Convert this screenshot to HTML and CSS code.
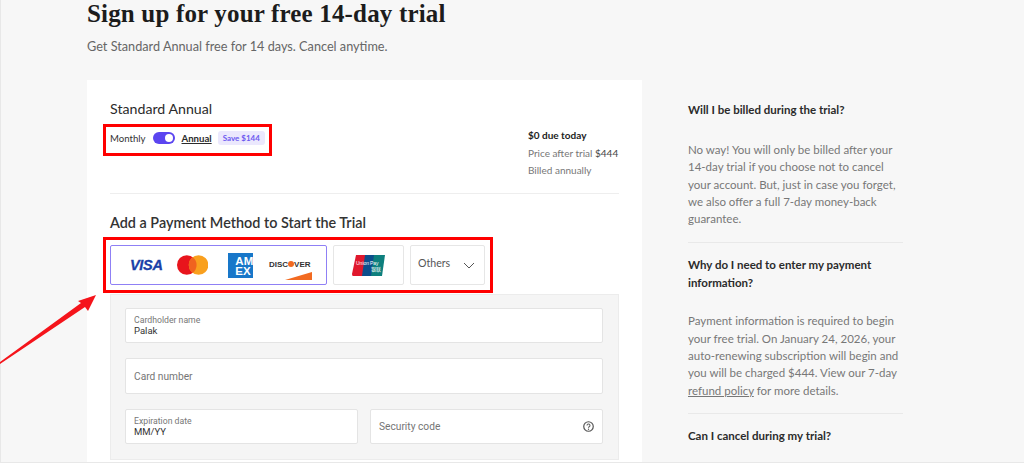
FILE: index.html
```html
<!DOCTYPE html>
<html lang="en">

<head>
  <meta charset="UTF-8">
  <title>Sign up for your free 14-day trial</title>
  <link rel="stylesheet" href="styles.css">
</head>

<body>
  <div class="page">
    <h1 class="title">Sign up for your free 14-day trial</h1>
    <p class="subtitle">Get Standard Annual free for 14 days. Cancel anytime.</p>

    <div class="columns">
      <main class="card">
        <!-- plan -->
        <section class="plan">
          <div class="plan-left">
            <h2 class="plan-name">Standard Annual</h2>
            <div class="billing">
              <span class="billing-label">Monthly</span>
              <span class="toggle"><span class="toggle-knob"></span></span>
              <span class="billing-active">Annual</span>
              <span class="save">Save $144</span>
            </div>
          </div>
          <div class="price">
            <div class="price-due">$0 due today</div>
            <div>Price after trial <span class="price-amount">$444</span></div>
            <div>Billed annually</div>
          </div>
        </section>

        <!-- payment -->
        <h2 class="pay-title">Add a Payment Method to Start the Trial</h2>
        <div class="methods">
          <div class="method method-cards">
            <span class="visa">VISA</span>
            <svg class="mc" width="32" height="20" viewBox="0 0 32 20">
              <circle cx="10" cy="10" r="10" fill="#e8141c" />
              <circle cx="22" cy="10" r="10" fill="#f9a01e" />
              <path d="M16 2a10 10 0 0 1 0 16a10 10 0 0 1 0-16z" fill="#f0631f" />
            </svg>
            <span class="amex">AM<br>EX</span>
            <span class="discover">
              <span class="discover-name">DISC<i class="discover-dot"></i>VER</span>
              <svg class="discover-wedge" width="27" height="8" viewBox="0 0 27 8">
                <path d="M0 8L27 0V8z" fill="#f26a21" />
              </svg>
            </span>
          </div>
          <div class="method method-union">
            <svg width="33" height="21" viewBox="0 0 33 21">
              <path d="M4 0H15L12 21H1Q0 21 0 19z" fill="#e0182d" />
              <path d="M13 0H24L21 21H10z" fill="#0c4e8c" />
              <path d="M22 0H33L30 21H19z" fill="#0d7f7d" />
              <text x="4" y="10" class="union-text">Union</text>
              <text x="18" y="10" class="union-text">Pay</text>
              <text x="19" y="16" class="union-text">银联</text>
            </svg>
          </div>
          <div class="method method-others">
            <span class="others-text">Others</span>
            <svg width="12" height="7" viewBox="0 0 12 7">
              <path d="M1 1l5 5l5-5" fill="none" stroke="#555" stroke-width="1" />
            </svg>
          </div>
        </div>

        <div class="form">
          <div class="field field-filled">
            <label class="field-label">Cardholder name</label>
            <div class="field-value">Palak</div>
          </div>
          <div class="field field-tall">
            <span class="field-hint">Card number</span>
          </div>
          <div class="field-row">
            <div class="field field-filled">
              <label class="field-label">Expiration date</label>
              <div class="field-value">MM/YY</div>
            </div>
            <div class="field field-help">
              <span class="field-hint">Security code</span>
              <svg width="11" height="11" viewBox="0 0 12 12">
                <circle cx="6" cy="6" r="5.2" fill="none" stroke="#555" stroke-width="1.3" />
                <path d="M4.4 4.8a1.6 1.6 0 1 1 2.4 1.4c-.6.3-.8.5-.8 1.1" fill="none" stroke="#555" stroke-width="1.1" />
                <circle cx="6" cy="9" r=".7" fill="#555" />
              </svg>
            </div>
          </div>
        </div>
      </main>

      <aside class="faq">
        <section class="faq-item">
          <h3 class="faq-q">Will I be billed during the trial?</h3>
          <p class="faq-a">No way! You will only be billed after your 14-day trial if you choose not to cancel your account. But, just in case you forget, we also offer a full 7-day money-back guarantee.</p>
        </section>
        <section class="faq-item faq-item-second">
          <h3 class="faq-q">Why do I need to enter my payment information?</h3>
          <p class="faq-a">Payment information is required to begin your free trial. On January 24, 2026, your auto-renewing subscription will begin and you will be charged $444. View our 7-day <a class="faq-link">refund policy</a> for more details.</p>
        </section>
        <section class="faq-item">
          <h3 class="faq-q">Can I cancel during my trial?</h3>
        </section>
      </aside>
    </div>
  </div>

  <!-- annotations drawn over the screenshot -->
  <div class="mark mark-billing"></div>
  <div class="mark mark-methods"></div>
  <svg class="arrow" width="98" height="74" viewBox="0 0 98 74">
    <path d="M0 70L81 11L78 9L96 3L88 19L85 15L0 72z" fill="#f5141b" />
  </svg>
</body>

</html>
```

FILE: styles.css
```css
* {
  margin: 0;
  padding: 0;
  box-sizing: border-box;
}

html,
body {
  height: 463px;
  overflow: hidden;
}

body {
  position: relative;
  background: #f7f7f7;
  color: #2b2b2b;
  font-family: "Lato", "Liberation Sans", sans-serif;
}

.page {
  height: 463px;
  overflow: hidden;
  padding-left: 86px;
  border-left: 1px solid #e8e8e8;
  border-bottom: 1px solid #e8e8e8;
}

.title {
  height: 30px;
  font-family: "Liberation Serif", serif;
  font-size: 25px;
  line-height: 27px;
  font-weight: 700;
  letter-spacing: .17px;
  color: #1c1c1c;
}

.subtitle {
  margin-top: 7px;
  font-size: 12.7px;
  line-height: 18px;
  color: #666;
}

.columns {
  display: flex;
  gap: 46px;
  margin-top: 25px;
}

/* card */
.card {
  width: 555px;
  height: 383px;
  padding: 20px 23px 0;
  background: #fff;
  flex-shrink: 0;
}

.plan {
  display: flex;
  justify-content: space-between;
  height: 94px;
  border-bottom: 1px solid #eee;
}

.plan-name {
  font-size: 14.2px;
  line-height: 18px;
  font-weight: 400;
}

.billing {
  display: flex;
  align-items: center;
  gap: 7px;
  margin-top: 13px;
  font-size: 9.6px;
}

.billing-label {
  color: #333;
}

.toggle {
  display: flex;
  justify-content: flex-end;
  align-items: center;
  width: 22px;
  height: 12px;
  padding-right: 2px;
  border-radius: 6px;
  background: #5b45f0;
}

.toggle-knob {
  width: 8px;
  height: 8px;
  border-radius: 50%;
  background: #fff;
}

.billing-active {
  font-weight: 700;
  text-decoration: underline;
}

.save {
  margin-left: -1px;
  padding: 2px 5px;
  border-radius: 3px;
  background: #ebe8fd;
  color: #6d5af0;
  font-size: 8px;
  line-height: 10px;
  font-weight: 700;
}

.price {
  width: 91px;
  margin-top: 27px;
  font-size: 10px;
  line-height: 17.5px;
  color: #777;
  white-space: nowrap;
}

.price-due {
  color: #222;
  font-weight: 700;
}

.price-amount {
  color: #444;
}

.pay-title {
  margin-top: 20px;
  font-size: 14.4px;
  line-height: 18px;
  font-weight: 600;
  color: #333;
}

.methods {
  display: flex;
  gap: 6px;
  margin-top: 13px;
  height: 40px;
}

.method {
  display: flex;
  align-items: center;
  background: #fff;
  border: 1.5px solid #e6e6e6;
  border-radius: 2px;
}

.method-cards {
  width: 217px;
  padding: 0 14px 0 19px;
  border-color: #8f80f5;
}

.visa {
  width: 48px;
  color: #1a3fa8;
  font-family: "Liberation Sans", sans-serif;
  font-size: 14.5px;
  font-weight: 700;
  font-style: italic;
  letter-spacing: -.3px;
  -webkit-text-stroke: .3px #1a3fa8;
}

.amex {
  width: 25px;
  height: 25px;
  margin-left: 20px;
  padding: 3px 0 0 7px;
  overflow: hidden;
  background: #1877c9;
  color: #fff;
  font-family: "Liberation Sans", sans-serif;
  font-size: 11.5px;
  line-height: 10px;
  font-weight: 700;
  white-space: nowrap;
}

.discover {
  display: flex;
  flex-direction: column;
  align-items: flex-end;
  width: 43px;
  margin-left: 16px;
  margin-top: 8px;
}

.discover-name {
  width: 40px;
  margin-right: 3px;
  color: #333;
  font-family: "Liberation Sans", sans-serif;
  font-size: 8px;
  font-weight: 700;
  line-height: 11px;
  white-space: nowrap;
}

.discover-dot {
  display: inline-block;
  width: 6px;
  height: 6px;
  border-radius: 50%;
  background: #f26a21;
}

.discover-wedge {
  display: block;
  margin-top: 2px;
}

.method-union {
  justify-content: center;
  width: 71px;
}

.union-text {
  fill: #fff;
  font-family: "Liberation Sans", "Noto Sans CJK SC", sans-serif;
  font-size: 5px;
}

.method-others {
  justify-content: space-between;
  width: 75px;
  padding: 0 9px 0 7px;
  font-size: 10.6px;
  color: #555;
}

.others-text {
  margin-bottom: 5px;
}

/* form */
.form {
  display: flex;
  flex-direction: column;
  gap: 15px;
  height: 166px;
  margin-top: 9px;
  padding: 13px 15px 0 14px;
  background: #f5f5f5;
  border: 1px solid #ececec;
}

.field {
  display: flex;
  flex-direction: column;
  justify-content: center;
  height: 35px;
  padding: 0 8px;
  background: #fff;
  border: 1px solid #e4e4e4;
  border-radius: 2px;
  font-family: "Roboto", sans-serif;
}

.field-tall {
  height: 36px;
}

.field-row {
  display: flex;
  gap: 12px;
}

.field-row .field {
  flex: 1;
}

.field-label {
  font-size: 8.7px;
  line-height: 10.5px;
  color: #777;
}

.field-value {
  font-size: 9.5px;
  line-height: 10.5px;
  color: #333;
}

.field-hint {
  font-size: 10.2px;
  color: #757575;
}

.field-help {
  flex-direction: row;
  justify-content: space-between;
  align-items: center;
}

/* faq */
.faq {
  width: 215px;
  padding-top: 21px;
  font-size: 11.5px;
}

.faq-item {
  padding-bottom: 15px;
  border-bottom: 1px solid #e9e9e9;
  margin-bottom: 13px;
}

.faq-item:last-child {
  border-bottom: 0;
}

.faq-q {
  font-size: 11.5px;
  line-height: 18px;
  font-weight: 700;
  color: #2b2b2b;
}

.faq-a {
  margin-top: 22px;
  line-height: 17.3px;
  color: #777;
}

.faq-item-second {
  padding-bottom: 14px;
}

.faq-item-second .faq-a {
  margin-top: 20px;
}

.faq-link {
  text-decoration: underline;
}

/* annotations */
.mark {
  position: absolute;
  border: 3px solid #f00;
}

.mark-billing {
  left: 103px;
  top: 124px;
  width: 169px;
  height: 32px;
}

.mark-methods {
  left: 103px;
  top: 237px;
  width: 390px;
  height: 56px;
}

.arrow {
  position: absolute;
  left: 0;
  top: 292px;
}
```
